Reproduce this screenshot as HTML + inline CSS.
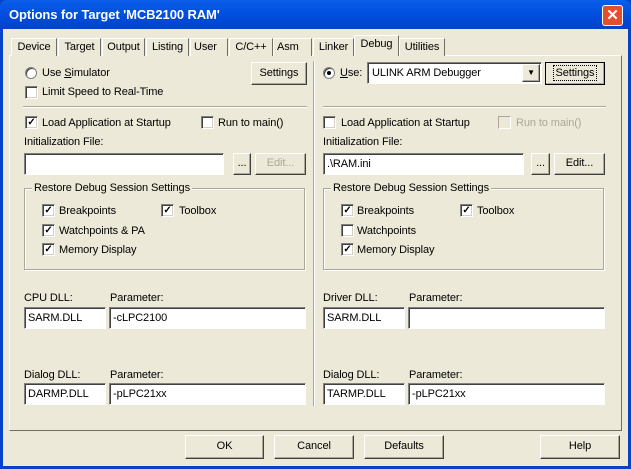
<!DOCTYPE html>
<html><head><style>
*{box-sizing:border-box;margin:0;padding:0}
body{width:631px;height:469px;overflow:hidden;background:#0842c8;font-family:"Liberation Sans",sans-serif;font-size:11px;letter-spacing:-0.1px;color:#000;position:relative}
.a{position:absolute;white-space:nowrap}
#win{position:absolute;left:3px;top:29px;width:625px;height:437px;background:#ece9d8}
#title{position:absolute;left:0;top:0;width:631px;height:30px;background:linear-gradient(#0a5fe8,#0250e0 40%,#0046d4 80%,#0a3fc0);border-radius:7px 7px 0 0}
.cbtn{position:absolute;background:#ece9d8;border-top:1px solid #fff;border-left:1px solid #fff;border-right:1px solid #404040;border-bottom:1px solid #404040;box-shadow:inset -1px -1px 0 #aca899;text-align:center;line-height:19px}
.inp{position:absolute;background:#fff;border-top:1px solid #808080;border-left:1px solid #808080;border-right:1px solid #fff;border-bottom:1px solid #fff;box-shadow:inset 1px 1px 0 #404040;padding-left:3px;line-height:20px}
.cb{position:absolute;width:13px;height:13px;background:#fff;border-top:1px solid #808080;border-left:1px solid #808080;border-right:1px solid #fff;border-bottom:1px solid #fff;box-shadow:inset 1px 1px 0 #404040,inset -1px -1px 0 #d4d0c8;font-size:10px;line-height:11px;text-align:center;font-weight:bold}
.rd{position:absolute;width:12px;height:12px;border-radius:50%;background:#fff;border:1px solid #808080;box-shadow:inset 1px 1px 0 #404040}
.grp{position:absolute;border:1px solid #aca899;box-shadow:1px 1px 0 #fff,inset 1px 1px 0 #fff}
.tab{position:absolute;top:38px;height:18px;border:1px solid #fff;border-right:1px solid #716f64;border-bottom:none;text-align:center;line-height:16px;background:#ece9d8}
</style></head><body>
<div id="title"></div>
<div class="a" style="left:9px;top:7px;color:#fff;font-weight:bold;font-size:13px;">Options for Target 'MCB2100 RAM'</div>
<div class="a" style="left:602px;top:5px;width:21px;height:21px;background:#e0502c;border:1px solid #fff;border-radius:3px;color:#fff;font-weight:bold;font-size:15px;text-align:center;line-height:19px">✕</div>
<div id="win"></div>
<div class="a" style="left:9px;top:55px;width:613px;height:376px;border:1px solid #fff;border-right-color:#716f64;border-bottom-color:#716f64;background:#ece9d8"></div>
<div class="tab" style="left:11px;width:46px">Device</div>
<div class="tab" style="left:58px;width:43px">Target</div>
<div class="tab" style="left:102px;width:43px">Output</div>
<div class="tab" style="left:146px;width:43px">Listing</div>
<div class="tab" style="left:190px;width:38px;text-align:left;padding-left:3px">User</div>
<div class="tab" style="left:229px;width:44px">C/C++</div>
<div class="tab" style="left:273px;width:39px;text-align:left;padding-left:3px">Asm</div>
<div class="tab" style="left:313px;width:41px">Linker</div>
<div class="tab" style="left:354px;top:35px;height:21px;width:45px;border-bottom:none;z-index:2">Debug</div>
<div class="tab" style="left:399px;width:46px">Utilities</div>

<div class="rd" style="left:25px;top:67px"></div>
<div class="a" style="left:42px;top:67px">Use <u>S</u>imulator</div>
<div class="cbtn" style="left:251px;top:62px;width:56px;height:23px;line-height:20px">Settings</div>
<div class="cb" style="left:25px;top:86px"></div>
<div class="a" style="left:42px;top:86px">Limit Speed to Real-Time</div>
<div class="a" style="left:23px;top:106px;width:284px;height:2px;border-top:1px solid #aca899;border-bottom:1px solid #fff"></div>
<div class="a" style="left:313px;top:61px;width:2px;height:345px;border-left:1px solid #aca899;border-right:1px solid #fff"></div>
<div class="a" style="left:323px;top:106px;width:283px;height:2px;border-top:1px solid #aca899;border-bottom:1px solid #fff"></div>

<div class="cb" style="left:25px;top:116px">✓</div>
<div class="a" style="left:42px;top:117px">Load Application at Startup</div>
<div class="cb" style="left:201px;top:116px"></div>
<div class="a" style="left:218px;top:117px">Run to main()</div>
<div class="a" style="left:24px;top:136px">Initialization File:</div>
<div class="inp" style="left:24px;top:153px;width:200px;height:22px"></div>
<div class="cbtn" style="left:233px;top:153px;width:18px;height:22px">...</div>
<div class="cbtn" style="left:255px;top:153px;width:51px;height:22px;color:#aca899">Edit...</div>
<div class="grp" style="left:24px;top:188px;width:281px;height:82px"></div>
<div class="a" style="left:32px;top:182px;background:#ece9d8;padding:0 2px">Restore Debug Session Settings</div>
<div class="cb" style="left:42px;top:204px">✓</div><div class="a" style="left:59px;top:205px">Breakpoints</div>
<div class="cb" style="left:161px;top:204px">✓</div><div class="a" style="left:179px;top:205px">Toolbox</div>
<div class="cb" style="left:42px;top:224px">✓</div><div class="a" style="left:59px;top:225px">Watchpoints &amp; PA</div>
<div class="cb" style="left:42px;top:243px">✓</div><div class="a" style="left:59px;top:244px">Memory Display</div>

<div class="a" style="left:24px;top:292px">CPU DLL:</div>
<div class="a" style="left:110px;top:292px">Parameter:</div>
<div class="inp" style="left:24px;top:307px;width:82px;height:22px">SARM.DLL</div>
<div class="inp" style="left:109px;top:307px;width:197px;height:22px">-cLPC2100</div>
<div class="a" style="left:24px;top:369px">Dialog DLL:</div>
<div class="a" style="left:110px;top:369px">Parameter:</div>
<div class="inp" style="left:24px;top:383px;width:82px;height:22px">DARMP.DLL</div>
<div class="inp" style="left:109px;top:383px;width:197px;height:22px">-pLPC21xx</div>

<div class="rd" style="left:323px;top:67px"><div style="position:absolute;left:3px;top:3px;width:4px;height:4px;border-radius:50%;background:#000"></div></div>
<div class="a" style="left:340px;top:67px"><u>U</u>se:</div>
<div class="inp" style="left:367px;top:62px;width:175px;height:22px;padding-left:4px">ULINK ARM Debugger</div>
<div class="cbtn" style="left:522px;top:64px;width:18px;height:18px;font-size:8px;line-height:16px">▼</div>
<div class="cbtn" style="left:545px;top:62px;width:60px;height:23px;border:1px solid #000;line-height:20px"><span style="border:1px dotted #000;padding:1px 2px">Settings</span></div>
<div class="cb" style="left:323px;top:116px"></div>
<div class="a" style="left:341px;top:117px">Load Application at Startup</div>
<div class="cb" style="left:498px;top:116px;background:#ece9d8;box-shadow:none;border-color:#aca899 #fff #fff #aca899"></div>
<div class="a" style="left:516px;top:117px;color:#aca899">Run to main()</div>
<div class="a" style="left:323px;top:136px">Initialization File:</div>
<div class="inp" style="left:323px;top:153px;width:201px;height:22px">.\RAM.ini</div>
<div class="cbtn" style="left:531px;top:153px;width:19px;height:22px">...</div>
<div class="cbtn" style="left:554px;top:153px;width:51px;height:22px">Edit...</div>
<div class="grp" style="left:323px;top:188px;width:281px;height:82px"></div>
<div class="a" style="left:331px;top:182px;background:#ece9d8;padding:0 2px">Restore Debug Session Settings</div>
<div class="cb" style="left:341px;top:204px">✓</div><div class="a" style="left:357px;top:205px">Breakpoints</div>
<div class="cb" style="left:460px;top:204px">✓</div><div class="a" style="left:477px;top:205px">Toolbox</div>
<div class="cb" style="left:341px;top:224px"></div><div class="a" style="left:357px;top:225px">Watchpoints</div>
<div class="cb" style="left:341px;top:243px">✓</div><div class="a" style="left:357px;top:244px">Memory Display</div>

<div class="a" style="left:323px;top:292px">Driver DLL:</div>
<div class="a" style="left:409px;top:292px">Parameter:</div>
<div class="inp" style="left:323px;top:307px;width:82px;height:22px">SARM.DLL</div>
<div class="inp" style="left:408px;top:307px;width:197px;height:22px"></div>
<div class="a" style="left:323px;top:369px">Dialog DLL:</div>
<div class="a" style="left:409px;top:369px">Parameter:</div>
<div class="inp" style="left:323px;top:383px;width:82px;height:22px">TARMP.DLL</div>
<div class="inp" style="left:408px;top:383px;width:197px;height:22px">-pLPC21xx</div>

<div class="cbtn" style="left:185px;top:435px;width:79px;height:24px;line-height:21px">OK</div>
<div class="cbtn" style="left:274px;top:435px;width:80px;height:24px;line-height:21px">Cancel</div>
<div class="cbtn" style="left:364px;top:435px;width:80px;height:24px;line-height:21px">Defaults</div>
<div class="cbtn" style="left:540px;top:435px;width:80px;height:24px;line-height:21px">Help</div>
</body></html>
